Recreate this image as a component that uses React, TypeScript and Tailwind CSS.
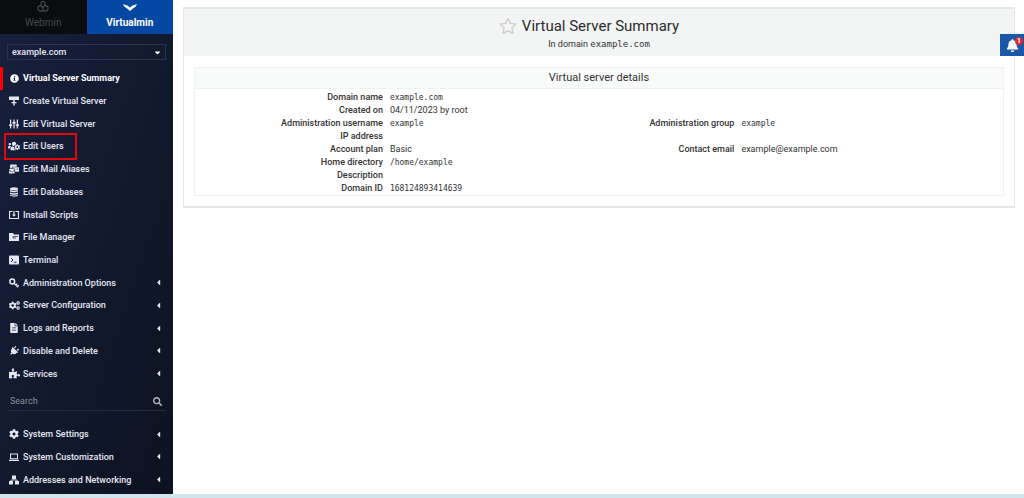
import React from 'react';
import {
  FaInfoCircle,
  FaUsersCog,
  FaMailBulk,
  FaCogs,
  FaFileAlt,
  FaPlug,
  FaPuzzlePiece,
  FaCog,
  FaSearch,
  FaBell,
  FaRegStar,
  FaCaretLeft,
  FaCaretDown,
} from 'react-icons/fa';

interface MenuItem {
  label: string;
  icon: React.ReactNode;
  active?: boolean;
  marked?: boolean;
  sub?: boolean;
}

const Svg = ({ children }: { children: React.ReactNode }) => (
  <svg viewBox="0 0 20 20" width="10" height="10" fill="currentColor">
    {children}
  </svg>
);

const CreateIcon = () => (
  <Svg>
    <path d="M0 1h20v7H0z" />
    <path d="M8.500 8h3v4H15v2.500h-3.500V19h-3v-4.500H5V12h3.500z" />
  </Svg>
);

const SlidersIcon = () => (
  <Svg>
    <path d="M2 1h2.500v18H2zM8.800 1h2.500v18H8.800zM15.500 1H18v18h-2.500z" />
    <path d="M0 11h6.500v3H0zM6.800 6h6.500v3H6.800zM13.500 11H20v3h-6.500z" />
  </Svg>
);

const DatabaseIcon = () => (
  <Svg>
    <ellipse cx="10" cy="3.500" rx="8" ry="3" />
    <path d="M2 5.500c3 2.500 13 2.500 16 0v3c-3 2.500-13 2.500-16 0zM2 10.500c3 2.500 13 2.500 16 0v3c-3 2.500-13 2.500-16 0zM2 15.200c3 2.500 13 2.500 16 0v2c-3 3.200-13 3.200-16 0z" />
  </Svg>
);

const InstallIcon = () => (
  <Svg>
    <path d="M0 2h7v2.200H2.200v11.600h15.600V4.200H13V2h7v16H0z" />
    <path d="M8.800 2h2.400v7H14l-4 4.500L6 9h2.800z" />
  </Svg>
);

const FolderIcon = () => (
  <Svg>
    <path d="M0 2h8l2 3h10v13H0z" />
    <path d="M8 9h10M8 9v3h6" fill="none" stroke="#121a30" strokeWidth="1.300" />
  </Svg>
);

const TerminalIcon = () => (
  <Svg>
    <rect x="0" y="1" width="20" height="18" rx="2" />
    <path d="M4 6l4 4-4 4M10 14.500h5" fill="none" stroke="#121a30" strokeWidth="1.800" />
  </Svg>
);

const KeyIcon = () => (
  <Svg>
    <circle cx="6.500" cy="7" r="4.800" fill="none" stroke="currentColor" strokeWidth="3" />
    <path d="M10 10.500l8 8M13.500 14.500l3-3M16.500 17.500l3-3" fill="none" stroke="currentColor" strokeWidth="2.500" />
  </Svg>
);

const LaptopIcon = () => (
  <Svg>
    <path d="M2 3h16v11.500H2zM4 5v7.500h12V5z" fillRule="evenodd" />
    <path d="M0 15.500h20V18H0z" />
  </Svg>
);

const NetworkIcon = () => (
  <Svg>
    <path d="M6 1h8v7H6zM0 12h8v7H0zM12 12h8v7h-8z" />
    <path d="M10 7v3M4 13v-3h12v3" fill="none" stroke="currentColor" strokeWidth="1.800" />
  </Svg>
);

const mainMenu: MenuItem[] = [
  { label: 'Virtual Server Summary', icon: <FaInfoCircle size={9} />, active: true },
  { label: 'Create Virtual Server', icon: <CreateIcon /> },
  { label: 'Edit Virtual Server', icon: <SlidersIcon /> },
  { label: 'Edit Users', icon: <FaUsersCog size={12} />, marked: true },
  { label: 'Edit Mail Aliases', icon: <FaMailBulk size={10} /> },
  { label: 'Edit Databases', icon: <DatabaseIcon /> },
  { label: 'Install Scripts', icon: <InstallIcon /> },
  { label: 'File Manager', icon: <FolderIcon /> },
  { label: 'Terminal', icon: <TerminalIcon /> },
  { label: 'Administration Options', icon: <KeyIcon />, sub: true },
  { label: 'Server Configuration', icon: <FaCogs size={11} />, sub: true },
  { label: 'Logs and Reports', icon: <FaFileAlt size={10} />, sub: true },
  { label: 'Disable and Delete', icon: <FaPlug size={10} className="rotate-45" />, sub: true },
  { label: 'Services', icon: <FaPuzzlePiece size={11} />, sub: true },
];

const systemMenu: MenuItem[] = [
  { label: 'System Settings', icon: <FaCog size={10} />, sub: true },
  { label: 'System Customization', icon: <LaptopIcon />, sub: true },
  { label: 'Addresses and Networking', icon: <NetworkIcon />, sub: true },
];

const Menu = ({ items, className }: { items: MenuItem[]; className: string }) => (
  <ul className={`grid auto-rows-fr ${className}`}>
    {items.map((item) => (
      <li key={item.label} className="relative flex items-center">
        {item.active && <span className="absolute inset-y-0 left-0 w-[3px] bg-[#fb0007]" />}
        {item.marked && (
          <span className="absolute -inset-y-[2px] left-1 w-[73px] border-2 border-[#e3060c]" />
        )}
        <a
          href="#"
          className={`flex w-full items-center pr-[10px] pl-2 whitespace-nowrap ${item.active ? 'font-bold text-white' : 'font-medium text-[#e6e7f2]'}`}
        >
          <span className="mr-[3px] flex w-3 justify-center">{item.icon}</span>
          {item.label}
          {item.sub && <FaCaretLeft size={9} className="ml-auto" />}
        </a>
      </li>
    ))}
  </ul>
);

interface Field {
  label: string;
  value?: string;
  mono?: boolean;
}

const rows: Field[][] = [
  [{ label: 'Domain name', value: 'example.com', mono: true }],
  [{ label: 'Created on', value: '04/11/2023 by root' }],
  [
    { label: 'Administration username', value: 'example', mono: true },
    { label: 'Administration group', value: 'example', mono: true },
  ],
  [{ label: 'IP address' }],
  [
    { label: 'Account plan', value: 'Basic' },
    { label: 'Contact email', value: 'example@example.com' },
  ],
  [{ label: 'Home directory', value: '/home/example', mono: true }],
  [{ label: 'Description' }],
  [{ label: 'Domain ID', value: '168124893414639', mono: true }],
];

const mono = "font-['DejaVu_Sans_Mono',monospace]";

const Sidebar = () => (
  <aside className="flex w-[173px] shrink-0 flex-col bg-linear-to-br from-[#18203e] via-[#111a2e] to-[#0d1220] pb-[3px] text-[9px] leading-4">
    <div className="grid h-[34px] shrink-0 grid-cols-2 text-[10px]">
      <button className="flex flex-col items-center justify-end bg-[#0b0c0f] pb-[3px] text-[#44474c]">
        <svg viewBox="0 0 24 24" width="12" height="12" fill="none" stroke="currentColor" strokeWidth="2.500">
          <path d="M8 9V5a4 4 0 0 1 8 0v4M8 9c-5 0-7 3-6 7s6 6 10 3c4 3 9 1 10-3s-1-7-6-7M8 9l4 4 4-4M12 13v6" />
        </svg>
        <span className="mt-[2px]">Webmin</span>
      </button>
      <button className="flex flex-col items-center justify-end bg-[#0448a3] pb-[3px] font-bold text-white">
        <svg viewBox="0 0 28 14" width="14" height="7" fill="currentColor">
          <path d="M0 0c4 2 6 2 9 3l5 4 5-4c3-1 5-1 9-3-2 5-4 7-7 8l-7 6-7-6C4 7 2 5 0 0z" />
        </svg>
        <span className="mt-1">Virtualmin</span>
      </button>
    </div>

    <div className="relative mx-[7px] mt-[10px] mb-[7px] h-4 shrink-0">
      <select
        aria-label="Domain"
        className="block h-4 w-full appearance-none border border-[#2b3350] bg-transparent pl-1 text-[9px] leading-none font-medium text-[#e6e7f2]"
      >
        <option>example.com</option>
      </select>
      <FaCaretDown size={9} className="pointer-events-none absolute top-1 right-1 text-white" />
    </div>

    <Menu items={mainMenu} className="flex-[14]" />

    <label className="mx-[7px] mt-2 mb-3 flex h-[18px] shrink-0 items-center border-b border-[#242a3b] pr-1 pl-[3px]">
      <input
        type="text"
        aria-label="Search"
        placeholder="Search"
        className="min-w-0 flex-1 bg-transparent text-[9px] outline-none placeholder:text-[#8b8f9e]"
      />
      <FaSearch size={9} className="text-[#b4b7c6]" />
    </label>

    <Menu items={systemMenu} className="flex-[3]" />
  </aside>
);

export default function App() {
  return (
    <div className="flex h-screen flex-col bg-white font-[Roboto,sans-serif] text-[#333]">
      <div className="flex min-h-0 flex-1">
        <Sidebar />

        <main className="min-w-0 flex-1 pt-[7px] pr-[9px] pl-[10px]">
          <section className="border border-t-2 border-b-2 border-[#e6e7e7]">
            <header className="bg-[#f3f5f5] pt-[7px] pb-1 text-center">
              <h1 className="flex items-center justify-center gap-[5px] pr-5 text-[15px] leading-5 text-[#2c2c2c]">
                <FaRegStar size={18} className="text-[#cfcfd2]" />
                Virtual Server Summary
              </h1>
              <p className="text-[9px] leading-4">
                In domain <span className={mono}>example.com</span>
              </p>
            </header>

            <div className="mx-[10px] mt-[11px] mb-[10px] border border-[#f0f2f2]">
              <h2 className="border-b border-[#f0f2f2] bg-[#f9fbfb] text-center text-[11px] leading-5">
                Virtual server details
              </h2>
              <table className="mt-[2px] w-full table-fixed text-[9px] leading-[13px]">
                <colgroup>
                  <col className="w-[24%]" />
                  <col className="w-[21.5%]" />
                  <col className="w-[22%]" />
                  <col />
                </colgroup>
                <tbody>
                  {rows.map((row) => (
                    <tr key={row[0].label} className="h-[13px]">
                      {row.map((field) => (
                        <React.Fragment key={field.label}>
                          <th className="p-0 pr-[6px] text-right font-medium whitespace-nowrap">{field.label}</th>
                          <td className={`p-0 pl-px ${field.mono ? `text-[8px] ${mono}` : ''}`}>{field.value}</td>
                        </React.Fragment>
                      ))}
                    </tr>
                  ))}
                </tbody>
              </table>
            </div>
          </section>
        </main>
      </div>

      <div className="h-1 shrink-0 bg-[#cfe7ec]" />

      <button
        aria-label="Notifications"
        className="fixed top-[34px] right-0 flex h-[22px] w-6 items-center justify-center bg-[#1b57a9] text-white"
      >
        <FaBell size={13} />
        <span className="absolute top-[3px] right-[1px] flex size-2 items-center justify-center rounded-full bg-[#dc2a2f] text-[7px] font-bold">
          1
        </span>
      </button>
    </div>
  );
}
